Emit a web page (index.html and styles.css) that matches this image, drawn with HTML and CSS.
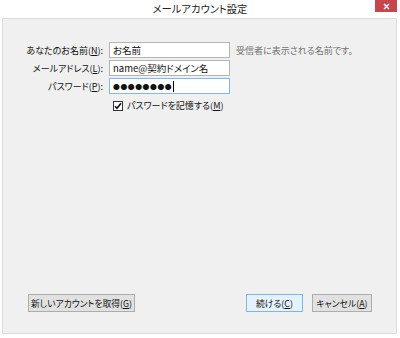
FILE: index.html
```html
<!DOCTYPE html>
<html lang="ja">
<head>
    <meta charset="UTF-8">
    <meta name="viewport" content="width=device-width, initial-scale=1.0">
    <title>メールアカウント設定</title>
    <link rel="stylesheet" href="styles.css">
</head>
<body>
    <div class="titlebar">
        <span></span>
        <div class="title">メールアカウント設定</div>
        <button class="close-btn" aria-label="閉じる">
            <svg width="7" height="7" viewBox="0 0 7 7"><path d="M1 1L6 6M6 1L1 6" stroke="#fff" stroke-width="1.4"/></svg>
        </button>
    </div>
    <div class="panel">
        <div class="form">
            <label class="field-label" for="yourName">あなたのお名前(<u>N</u>):</label>
            <input type="text" id="yourName" value="お名前">
            <span class="hint">受信者に表示される名前です。</span>

            <label class="field-label" for="email">メールアドレス(<u>L</u>):</label>
            <input type="text" id="email" value="name@契約ドメイン名">
            <span></span>

            <label class="field-label" for="password">パスワード(<u>P</u>):</label>
            <div class="input focused">
                <span class="dots">●●●●●●●●</span><span class="caret"></span>
            </div>
            <span></span>

            <span></span>
            <label class="remember">
                <span class="checkbox">
                    <svg width="8" height="8" viewBox="0 0 8 8"><path d="M1 4.2L3 6.3L7 1.3" fill="none" stroke="#111" stroke-width="1.6"/></svg>
                </span>
                <span>パスワードを記憶する(<u>M</u>)</span>
            </label>
        </div>
        <div class="button-row">
            <button class="btn wide-btn">新しいアカウントを取得(<u>G</u>)</button>
            <span class="spacer"></span>
            <button class="btn default-btn">続ける(<u>C</u>)</button>
            <button class="btn">キャンセル(<u>A</u>)</button>
        </div>
    </div>
</body>
</html>
```

FILE: styles.css
```css
body {
    margin: 0;
    background-color: #fff;
    font-family: "Noto Sans CJK JP", "Noto Sans", sans-serif;
    font-feature-settings: "palt";
    color: #111;
    width: 400px;
    height: 338px;
    overflow: hidden;
}
u {
    text-underline-offset: 1px;
}
.titlebar {
    height: 18px;
    display: grid;
    grid-template-columns: 1fr auto 1fr;
    align-items: start;
}
.title {
    font-size: 10.3px;
    line-height: 18px;
    color: #222;
}
.close-btn {
    justify-self: end;
    width: 22px;
    height: 12px;
    margin-right: 3px;
    padding: 0;
    border: none;
    background-color: #c7454d;
    display: flex;
    align-items: center;
    justify-content: center;
}
.panel {
    margin: 0 3px 0 2px;
    height: 314px;
    border: 1px solid #dcdcdc;
    background-color: #f0f0f0;
    display: flex;
    flex-direction: column;
    justify-content: space-between;
}
.form {
    padding-top: 23px;
    display: grid;
    grid-template-columns: 100px 121px auto;
    column-gap: 6px;
    row-gap: 2px;
    align-items: center;
    font-size: 9px;
}
.field-label {
    text-align: right;
}
input, .input {
    box-sizing: border-box;
    height: 16px;
    margin: 0;
    padding: 0 3px;
    border: 1px solid #b4b4b4;
    background-color: #fff;
    font-family: inherit;
    font-feature-settings: "palt";
    font-size: 9.5px;
    color: #111;
    outline: none;
}
.input {
    display: flex;
    align-items: center;
}
.focused {
    border-color: #82b8e8;
}
.dots {
    font-size: 6.8px;
    line-height: 10px;
    letter-spacing: 0.6px;
}
.caret {
    width: 1px;
    height: 11px;
    margin-left: 1px;
    background-color: #000;
}
.hint {
    color: #707070;
}
.remember {
    grid-column: 2 / 4;
    margin-top: 3px;
    padding-left: 4px;
    display: flex;
    align-items: center;
    gap: 4px;
}
.checkbox {
    box-sizing: border-box;
    width: 10px;
    height: 10px;
    border: 1px solid #333;
    background-color: #fff;
    display: flex;
    align-items: center;
    justify-content: center;
}
.button-row {
    display: flex;
    gap: 9px;
    padding: 0 24px 21px 25px;
}
.spacer {
    flex-grow: 1;
}
.btn {
    box-sizing: border-box;
    width: 60px;
    height: 18px;
    padding: 0;
    border: 1px solid #adadad;
    background-color: #e1e1e1;
    font-family: inherit;
    font-feature-settings: "palt";
    font-size: 8.8px;
    color: #111;
}
.wide-btn {
    width: 107px;
}
.default-btn {
    width: 57px;
    border-color: #7fb6ea;
    background-color: #e5f1fb;
}
```
